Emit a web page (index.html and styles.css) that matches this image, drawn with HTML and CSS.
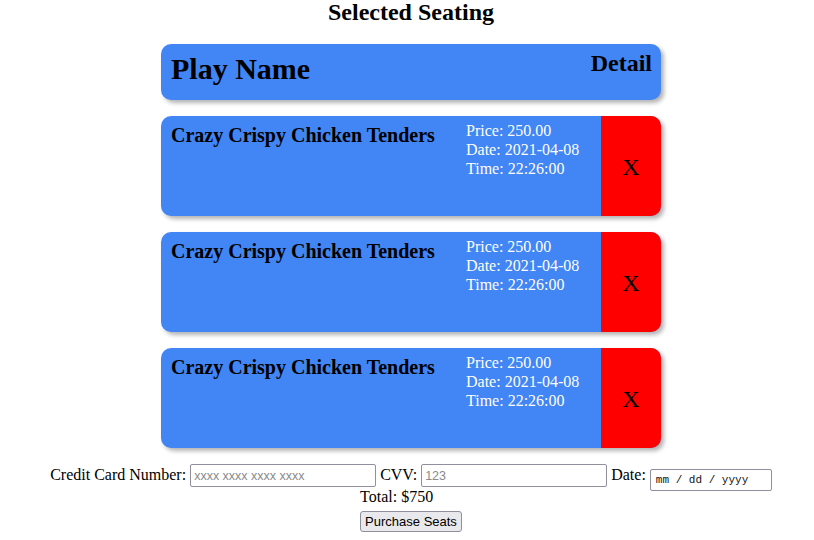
FILE: index.html
```html
<!DOCTYPE html>
<html>
<head>
<meta charset="utf-8">
<link rel="stylesheet" href="styles.css">
</head>
<body>
<div class="page">
  <h2 class="title">Selected Seating</h2>
  <div class="cards">
    <div class="card header-card">
      <h1 class="play-name">Play Name</h1>
      <h2 class="detail">Detail</h2>
    </div>
    <div class="card item-card">
      <div class="item-main">
        <h3 class="item-title">Crazy Crispy Chicken Tenders</h3>
        <div class="item-info">
          <div>Price: 250.00</div>
          <div>Date: 2021-04-08</div>
          <div>Time: 22:26:00</div>
        </div>
      </div>
      <div class="remove">X</div>
    </div>
    <div class="card item-card">
      <div class="item-main">
        <h3 class="item-title">Crazy Crispy Chicken Tenders</h3>
        <div class="item-info">
          <div>Price: 250.00</div>
          <div>Date: 2021-04-08</div>
          <div>Time: 22:26:00</div>
        </div>
      </div>
      <div class="remove">X</div>
    </div>
    <div class="card item-card">
      <div class="item-main">
        <h3 class="item-title">Crazy Crispy Chicken Tenders</h3>
        <div class="item-info">
          <div>Price: 250.00</div>
          <div>Date: 2021-04-08</div>
          <div>Time: 22:26:00</div>
        </div>
      </div>
      <div class="remove">X</div>
    </div>
  </div>
  <form class="pay-form">
    <div class="pay-row">
      <label>Credit Card Number: <input class="text-input" type="text" placeholder="xxxx xxxx xxxx xxxx"></label>
      <label>CVV: <input class="text-input" type="text" placeholder="123"></label>
      <label>Date: <input class="date-input" type="text" placeholder="mm / dd / yyyy"></label>
    </div>
    <div class="checkout">
      <div class="total">Total: $750</div>
      <button class="purchase" type="button">Purchase Seats</button>
    </div>
  </form>
</div>
</body>
</html>
```

FILE: styles.css
```css
html, body {
  margin: 0;
  padding: 0;
}
body {
  font-family: "Liberation Serif", "Times New Roman", serif;
  font-size: 16px;
  color: #000;
  background: #fff;
  padding-left: 8px;
}
.page {
  display: flex;
  flex-direction: column;
  align-items: center;
}
.title {
  margin: 0;
  font-size: 24px;
  line-height: 24px;
  font-weight: bold;
}
.cards {
  display: flex;
  flex-direction: column;
  gap: 16px;
  width: 500px;
  margin-top: 20px;
}
.card {
  background: #4285f4;
  border-radius: 10px;
  box-shadow: 3px 3px 4px rgba(0, 0, 0, 0.3);
}
.header-card {
  height: 56px;
  box-sizing: border-box;
  display: flex;
  justify-content: space-between;
  align-items: flex-start;
  padding: 0 9px 0 10px;
}
.play-name {
  margin: 8px 0 0;
  font-size: 30px;
  line-height: 34px;
}
.detail {
  margin: 5px 0 0;
  font-size: 24px;
  line-height: 28px;
}
.item-card {
  height: 100px;
  display: flex;
  overflow: hidden;
}
.item-main {
  flex: 1;
  display: flex;
  padding: 5px 0 0 10px;
}
.item-title {
  flex: 1;
  margin: 3px 0 0;
  font-size: 20px;
  line-height: 22px;
}
.item-info {
  width: 135px;
  color: #fff;
  line-height: 19px;
}
.remove {
  width: 60px;
  background: #ff0000;
  display: flex;
  align-items: center;
  justify-content: center;
  font-size: 24px;
  padding-top: 2px;
  box-sizing: border-box;
}
.pay-form {
  margin-top: 16px;
  display: flex;
  flex-direction: column;
  align-items: center;
}
.pay-row {
  white-space: nowrap;
  height: 24px;
}
.text-input {
  width: 186px;
  height: 23px;
  box-sizing: border-box;
  font-family: "Liberation Sans", Arial, sans-serif;
  font-size: 12.5px;
  border: 1px solid #8f8f9d;
  border-radius: 2px;
  padding: 1px 3px;
}
.text-input::placeholder {
  color: #8a8a8a;
}
.date-input {
  width: 122px;
  height: 22px;
  box-sizing: border-box;
  font-family: "Liberation Mono", "Courier New", monospace;
  font-size: 11px;
  border: 1px solid #8f8f9d;
  border-radius: 2px;
  padding: 1px 5px;
  vertical-align: -3px;
}
.date-input::placeholder {
  color: #111;
}
.checkout {
  display: flex;
  flex-direction: column;
  align-items: flex-start;
}
.total {
  line-height: 18px;
}
.purchase {
  margin-top: 5px;
  font-family: "Liberation Sans", Arial, sans-serif;
  font-size: 13px;
  padding: 0 4px;
  height: 21px;
  border: 1px solid #8f8f9d;
  border-radius: 3px;
  background: #e9e9ed;
  color: #000;
}
```
